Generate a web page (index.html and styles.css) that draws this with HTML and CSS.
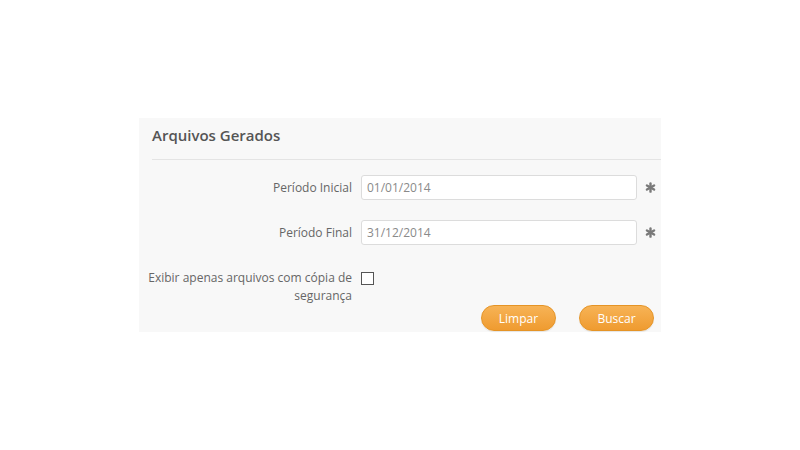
FILE: index.html
```html
<!DOCTYPE html>
<html lang="pt-BR">
<head>
<meta charset="utf-8">
<title>Arquivos Gerados</title>
<link rel="stylesheet" href="styles.css">
</head>
<body>
<div class="panel">
  <h2 class="title">Arquivos Gerados</h2>
  <form class="form">
    <div class="row">
      <label class="label" for="ini">Período Inicial</label>
      <input class="input" id="ini" type="text" value="01/01/2014">
      <svg class="req" width="11" height="11" viewBox="0 0 12 12"><g stroke="#7a7a7a" stroke-width="2.6" stroke-linecap="round"><line x1="6" y1="1.5" x2="6" y2="10.5"/><line x1="2.1" y1="3.75" x2="9.9" y2="8.25"/><line x1="2.1" y1="8.25" x2="9.9" y2="3.75"/></g></svg>
    </div>
    <div class="row">
      <label class="label" for="fim">Período Final</label>
      <input class="input" id="fim" type="text" value="31/12/2014">
      <svg class="req" width="11" height="11" viewBox="0 0 12 12"><g stroke="#7a7a7a" stroke-width="2.6" stroke-linecap="round"><line x1="6" y1="1.5" x2="6" y2="10.5"/><line x1="2.1" y1="3.75" x2="9.9" y2="8.25"/><line x1="2.1" y1="8.25" x2="9.9" y2="3.75"/></g></svg>
    </div>
    <div class="row row-check">
      <label class="label" for="bkp">Exibir apenas arquivos com cópia de segurança</label>
      <span class="check"></span>
    </div>
    <div class="actions">
      <button type="button" class="btn">Limpar</button>
      <button type="button" class="btn">Buscar</button>
    </div>
  </form>
</div>
</body>
</html>
```
FILE: styles.css
```css
html, body {
  margin: 0;
  padding: 0;
  background: #ffffff;
}
body {
  font-family: "Open Sans", "Noto Sans", sans-serif;
  width: 800px;
  height: 450px;
  padding-top: 118px;
  box-sizing: border-box;
}
.panel {
  margin-left: 139px;
  width: 522px;
  height: 214px;
  background: #f8f8f8;
  box-sizing: border-box;
}
.title {
  margin: 0 0 0 13px;
  height: 42px;
  box-sizing: border-box;
  padding-top: 7px;
  font-size: 15px;
  font-weight: 600;
  color: #555555;
  line-height: 20px;
  border-bottom: 1px solid #e4e4e4;
}
.form {
  margin: 0;
  padding-top: 15px;
}
.row {
  display: flex;
  align-items: center;
  height: 25px;
  margin-bottom: 20px;
}
.label {
  width: 213px;
  flex: none;
  text-align: right;
  font-size: 12px;
  color: #666666;
  line-height: 18px;
}
.input {
  margin-left: 9px;
  width: 276px;
  height: 25px;
  box-sizing: border-box;
  border: 1px solid #dcdcdc;
  border-radius: 3px;
  background: #ffffff;
  padding: 0 0 0 5px;
  font-family: "Open Sans", "Noto Sans", sans-serif;
  font-size: 12px;
  color: #8a8a8a;
  outline: none;
}
.req {
  margin-left: 8px;
  flex: none;
}
.row-check {
  height: 36px;
  align-items: flex-start;
  margin-top: 24px;
  margin-bottom: 0;
}
.check {
  margin-left: 9px;
  margin-top: 3px;
  width: 13px;
  height: 13px;
  box-sizing: border-box;
  border: 1px solid #555555;
  background: #ffffff;
  flex: none;
}
.actions {
  display: flex;
  justify-content: flex-end;
  gap: 23px;
  padding-right: 7px;
}
.btn {
  width: 75px;
  height: 26px;
  border: 1px solid #e59426;
  border-radius: 13px;
  background: linear-gradient(#f7b356, #ef9b30);
  color: #ffffff;
  font-family: "Open Sans", "Noto Sans", sans-serif;
  font-size: 12px;
  padding: 0;
  box-shadow: 0 1px 1px rgba(0,0,0,0.08);
}
```
